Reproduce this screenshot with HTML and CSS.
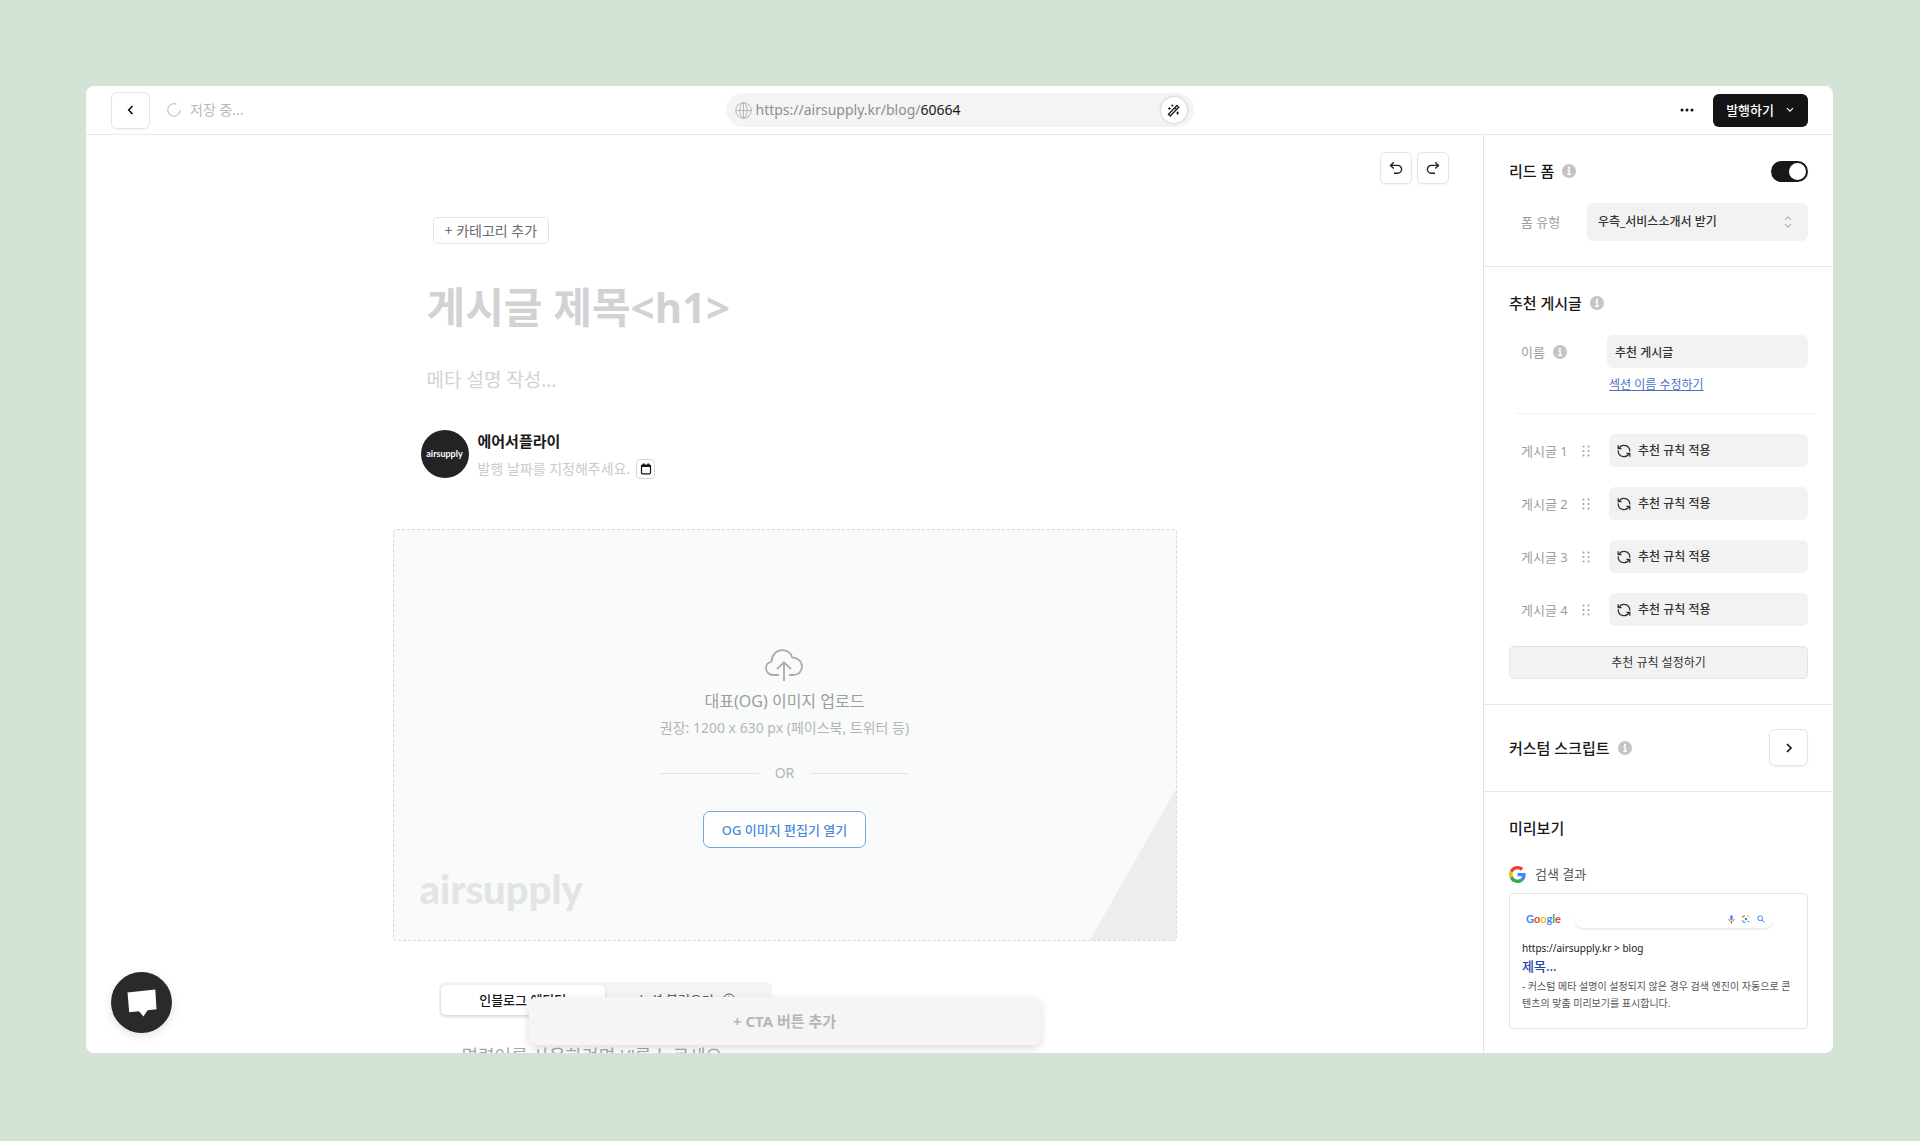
FILE: index.html
```html
<!DOCTYPE html>
<html lang="ko">
<head>
    <meta charset="UTF-8">
    <meta name="viewport" content="width=device-width, initial-scale=1.0">
    <title>airsupply blog editor</title>
    <link rel="stylesheet" href="styles.css">
</head>
<body>
    <!-- 공용 아이콘 -->
    <svg class="sprite" aria-hidden="true">
        <symbol id="i-info" viewBox="0 0 14 14">
            <circle cx="7" cy="7" r="7" fill="#c4c4c6"/>
            <circle cx="7" cy="3.9" r="1.1" fill="#fff"/>
            <path d="M5.5 6.3h1.7v4M5.3 10.3h3.6" fill="none" stroke="#fff" stroke-width="1.4"/>
        </symbol>
        <symbol id="i-drag" viewBox="0 0 8 12">
            <g fill="#9d9da1">
                <circle cx="1.5" cy="1.5" r="1"/><circle cx="6.5" cy="1.5" r="1"/>
                <circle cx="1.5" cy="6" r="1"/><circle cx="6.5" cy="6" r="1"/>
                <circle cx="1.5" cy="10.5" r="1"/><circle cx="6.5" cy="10.5" r="1"/>
            </g>
        </symbol>
        <symbol id="i-sync" viewBox="0 0 14 14">
            <path d="M1.2 1.2v3.4h3.4M2 4.4A5.7 5.7 0 0 1 12.7 7.6M12.8 12.8V9.4H9.4M12 9.600A5.700 5.700 0 0 1 1.300 6.400" fill="none" stroke="#333" stroke-width="1.3"/>
        </symbol>
    </svg>

    <div class="window">
        <header class="topbar">
            <div class="topbar-left">
                <button class="btn-box btn-back" type="button" aria-label="뒤로">
                    <svg width="12" height="12" viewBox="0 0 12 12"><path d="M7.5 2L3.7 6l3.8 4" fill="none" stroke="#111" stroke-width="1.6"/></svg>
                </button>
                <svg class="spinner" width="14" height="14" viewBox="0 0 14 14"><path d="M9.5 1.2A6.200 6.200 0 1 0 13.200 7" fill="none" stroke="#c4c4c6" stroke-width="1.2"/></svg>
                <span class="saving">저장 중...</span>
            </div>
            <div class="url-bar">
                <svg width="17" height="17" viewBox="0 0 17 17" fill="none" stroke="#b5b5b8"><circle cx="8.5" cy="8.5" r="7.8"/><ellipse cx="8.5" cy="8.5" rx="3.6" ry="7.8"/><path d="M.7 8.5h15.600M8.500.7v15.600"/></svg>
                <label class="url-base" for="slug">https://airsupply.kr/blog/</label>
                <input class="url-slug" id="slug" type="text" value="60664">
                <button class="btn-magic" type="button" aria-label="자동 생성">
                    <svg width="13" height="13" viewBox="0 0 13 13" fill="none" stroke="#222"><path d="M1.500 10.200l8.400-8.600 1.800 1.700-8.400 8.600zM7.700 3.800l1.800 1.700" stroke-width="1.4"/><path d="M2.400 3.200v2.600M1.100 4.500h2.600M5.300.6v2M4.300 1.600h2M10.600 7.600v2.800M9.200 9h2.800" stroke-width="1.2"/></svg>
                </button>
            </div>
            <div class="topbar-right">
                <button class="btn-more" type="button" aria-label="더보기">
                    <svg width="14" height="4" viewBox="0 0 14 4" fill="#111"><circle cx="2" cy="2" r="1.5"/><circle cx="7" cy="2" r="1.5"/><circle cx="12" cy="2" r="1.5"/></svg>
                </button>
                <button class="btn-publish" type="button">발행하기
                    <svg width="8" height="6" viewBox="0 0 8 6"><path d="M1 1.200l3 3 3-3" fill="none" stroke="#fff" stroke-width="1.1"/></svg>
                </button>
            </div>
        </header>

        <div class="workspace">
            <main class="editor">
                <div class="history">
                    <button class="btn-box btn-history" type="button" aria-label="실행 취소">
                        <svg width="14" height="14" viewBox="0 0 14 14"><path d="M4.800 1.300L1.500 4.400l3.300 3.100M1.700 4.400h7a3.900 3.900 0 0 1 0 7.800H5" fill="none" stroke="#222" stroke-width="1.4"/></svg>
                    </button>
                    <button class="btn-box btn-history" type="button" aria-label="다시 실행">
                        <svg width="14" height="14" viewBox="0 0 14 14"><path d="M9.200 1.300l3.300 3.100-3.300 3.100M12.300 4.400h-7a3.900 3.900 0 0 0 0 7.800H9" fill="none" stroke="#222" stroke-width="1.4"/></svg>
                    </button>
                </div>

                <div class="post">
                    <button class="btn-category" type="button">+ 카테고리 추가</button>
                    <input class="post-title" type="text" placeholder="게시글 제목&lt;h1&gt;" aria-label="게시글 제목">
                    <input class="post-meta" type="text" placeholder="메타 설명 작성..." aria-label="메타 설명">

                    <div class="author">
                        <div class="avatar">airsupply</div>
                        <div class="author-info">
                            <strong class="author-name">에어서플라이</strong>
                            <div class="publish-date">
                                <span>발행 날짜를 지정해주세요.</span>
                                <button class="btn-date" type="button" aria-label="날짜 선택">
                                    <svg width="12" height="12" viewBox="0 0 12 12"><rect x="1.5" y="2" width="9" height="8.800" rx="1" fill="none" stroke="#111" stroke-width="1.2"/><path d="M1.500 3h9M3.700.6v2M8.300.6v2" stroke="#111" stroke-width="1.8"/></svg>
                                </button>
                            </div>
                        </div>
                    </div>

                    <section class="cover">
                        <svg class="cover-corner" width="86" height="151" viewBox="0 0 86 151"><path d="M86 0v151H0z" fill="#ecedef"/></svg>
                        <span class="cover-logo">airsupply</span>
                        <div class="cover-body">
                            <svg class="cloud" width="38" height="32" viewBox="0 0 38 32" fill="none" stroke="#a9abae" stroke-width="1.8"><path d="M14 26H8.500C4 26 1 23 1 19.200c0-3.400 2.300-6 5.400-6.600C6.700 6 11.500 1.200 17.400 1.200c4.800 0 8.300 2.500 9.800 7.200 5.500.2 9.800 3.900 9.800 8.900 0 5-3.700 8.700-8.800 8.700H24"/><path d="M19 32V13.500M12 20.200l7-7 7 7"/></svg>
                            <p class="cover-title">대표(OG) 이미지 업로드</p>
                            <p class="cover-hint">권장: 1200 x 630 px (페이스북, 트위터 등)</p>
                            <div class="cover-or">OR</div>
                            <button class="btn-og" type="button">OG 이미지 편집기 열기</button>
                        </div>
                    </section>

                    <div class="tabs">
                        <button class="tab tab-active" type="button">인블로그 에디터</button>
                        <button class="tab" type="button">노션 불러오기
                            <svg width="14" height="14" viewBox="0 0 14 14" fill="none" stroke="#555"><circle cx="7" cy="7" r="6"/><path d="M7 6.500v4M7 3.500v1.200"/></svg>
                        </button>
                    </div>
                    <textarea class="post-body" rows="1" placeholder="명령어를 사용하려면 '/'를 누르세요" aria-label="본문"></textarea>
                </div>
            </main>

            <aside class="sidebar">
                <section class="panel">
                    <div class="panel-head">
                        <h2>리드 폼</h2>
                        <svg class="info"><use href="#i-info"/></svg>
                        <input class="toggle" type="checkbox" role="switch" aria-label="리드 폼 사용" checked>
                    </div>
                    <div class="field">
                        <label for="form-type">폼 유형</label>
                        <div class="select">
                            <select id="form-type">
                                <option>우측_서비스소개서 받기</option>
                            </select>
                            <svg width="8" height="12" viewBox="0 0 8 12"><path d="M1 3.800l3-3 3 3M1 8.200l3 3 3-3" fill="none" stroke="#8d8d91"/></svg>
                        </div>
                    </div>
                </section>

                <section class="panel">
                    <div class="panel-head">
                        <h2>추천 게시글</h2>
                        <svg class="info"><use href="#i-info"/></svg>
                    </div>
                    <div class="field">
                        <label for="section-name">이름</label>
                        <svg class="info"><use href="#i-info"/></svg>
                        <input class="name-input" id="section-name" type="text" value="추천 게시글">
                    </div>
                    <a class="edit-link" href="#">섹션 이름 수정하기</a>
                    <hr class="divider">
                    <ul class="posts">
                        <li><span>게시글 1</span><svg class="drag"><use href="#i-drag"/></svg><button class="btn-rule" type="button"><svg><use href="#i-sync"/></svg>추천 규칙 적용</button></li>
                        <li><span>게시글 2</span><svg class="drag"><use href="#i-drag"/></svg><button class="btn-rule" type="button"><svg><use href="#i-sync"/></svg>추천 규칙 적용</button></li>
                        <li><span>게시글 3</span><svg class="drag"><use href="#i-drag"/></svg><button class="btn-rule" type="button"><svg><use href="#i-sync"/></svg>추천 규칙 적용</button></li>
                        <li><span>게시글 4</span><svg class="drag"><use href="#i-drag"/></svg><button class="btn-rule" type="button"><svg><use href="#i-sync"/></svg>추천 규칙 적용</button></li>
                    </ul>
                    <button class="btn-settings" type="button">추천 규칙 설정하기</button>
                </section>

                <section class="panel">
                    <div class="panel-head">
                        <h2>커스텀 스크립트</h2>
                        <svg class="info"><use href="#i-info"/></svg>
                        <button class="btn-box btn-open" type="button" aria-label="열기">
                            <svg width="12" height="12" viewBox="0 0 12 12"><path d="M4 2l4 4-4 4" fill="none" stroke="#111" stroke-width="1.6"/></svg>
                        </button>
                    </div>
                </section>

                <section class="panel">
                    <div class="panel-head">
                        <h2>미리보기</h2>
                    </div>
                    <div class="preview-label">
                        <svg width="17" height="17" viewBox="0 0 48 48">
                            <path fill="#ea4335" d="M24 9.500c3.540 0 6.710 1.220 9.210 3.600l6.850-6.850C35.900 2.380 30.470 0 24 0 14.620 0 6.510 5.380 2.560 13.220l7.980 6.190C12.430 13.720 17.740 9.500 24 9.500z"/>
                            <path fill="#4285f4" d="M46.980 24.550c0-1.570-.15-3.090-.38-4.550H24v9.020h12.940c-.58 2.960-2.260 5.480-4.780 7.180l7.730 6c4.510-4.180 7.090-10.360 7.090-17.650z"/>
                            <path fill="#fbbc05" d="M10.530 28.590c-.48-1.450-.76-2.990-.76-4.590s.27-3.140.76-4.590l-7.980-6.190C.92 16.460 0 20.120 0 24c0 3.880.92 7.540 2.560 10.780l7.970-6.190z"/>
                            <path fill="#34a853" d="M24 48c6.480 0 11.930-2.130 15.890-5.810l-7.730-6c-2.150 1.450-4.920 2.300-8.160 2.300-6.260 0-11.570-4.220-13.470-9.910l-7.980 6.190C6.510 42.620 14.620 48 24 48z"/>
                        </svg>
                        검색 결과
                    </div>
                    <div class="preview-card">
                        <div class="google">
                            <span class="google-logo"><i class="b">G</i><i class="r">o</i><i class="y">o</i><i class="b">g</i><i class="g">l</i><i class="r">e</i></span>
                            <div class="google-search">
                                <svg width="7" height="9" viewBox="0 0 7 9" fill="none"><rect x="2.3" y=".3" width="2.4" height="5" rx="1.2" fill="#4285f4"/><path d="M.8 4c0 3.300 5.400 3.300 5.400 0" stroke="#ea4335" stroke-width=".9"/><path d="M3.500 6.500v2.200" stroke="#34a853"/></svg>
                                <svg width="8" height="8" viewBox="0 0 8 8" fill="none"><path d="M.6 2.800V2C.6 1.200 1.200.9 2 .9h1" stroke="#ea4335"/><path d="M5 .9h1c.9 0 1.400.4 1.400 1.200v.7" stroke="#fbbc05"/><path d="M.6 5v.9c0 .9.500 1.400 1.400 1.400h1.500" stroke="#4285f4"/><circle cx="4" cy="4.100" r="1.300" fill="#4285f4"/><circle cx="6.500" cy="6.600" r=".8" fill="#34a853"/></svg>
                                <svg width="8" height="8" viewBox="0 0 8 8" fill="none" stroke="#4285f4"><circle cx="3.200" cy="3.200" r="2.400"/><path d="M5 5l2.600 2.600"/></svg>
                            </div>
                        </div>
                        <div class="result-url">https://airsupply.kr &gt; blog</div>
                        <div class="result-title">제목...</div>
                        <p class="result-desc">- 커스텀 메타 설명이 설정되지 않은 경우 검색 엔진이 자동으로 콘텐츠의 맞춤 미리보기를 표시합니다.</p>
                    </div>
                </section>
            </aside>
        </div>

        <!-- 에디터 위에 떠 있는 버튼 -->
        <div class="cta-layer">
            <button class="btn-cta" type="button">+ CTA 버튼 추가</button>
        </div>
        <button class="btn-chat" type="button" aria-label="채팅 상담">
            <svg width="30" height="28" viewBox="0 0 30 28"><path d="M.5 3.500L28.300.5l1.200 19.700-8.800 1-4.300 6.300-4.400-5.300-9.800 1.100z" fill="#fff"/></svg>
        </button>
    </div>
</body>
</html>
```
FILE: styles.css
```css
* {
    box-sizing: border-box;
}
body {
    margin: 0;
    height: 100vh;
    padding: 86px 87px 88px 86px;
    background: #d5e3d6;
    color: #18181b;
    font-family: "Noto Sans", "Noto Sans CJK KR", sans-serif;
    font-size: 14px;
    line-height: 20px;
}
button, input, select, textarea {
    margin: 0;
    padding: 0;
    border: 0;
    background: none;
    color: inherit;
    font: inherit;
    outline: none;
}
button {
    cursor: pointer;
}
h2, p, ul {
    margin: 0;
    padding: 0;
}
svg {
    display: block;
    flex: none;
}
.sprite {
    position: absolute;
    width: 0;
    height: 0;
}
.window {
    position: relative;
    display: flex;
    flex-direction: column;
    height: 100%;
    background: #fff;
    border-radius: 8px;
    overflow: hidden;
}
.btn-box {
    display: flex;
    align-items: center;
    justify-content: center;
    background: #fff;
    border: 1px solid #e4e4e7;
    border-radius: 6px;
    box-shadow: 0 1px 2px rgba(0, 0, 0, .05);
}

/* topbar */
.topbar {
    display: grid;
    grid-template-columns: 1fr 468px 1fr;
    align-items: center;
    height: 49px;
    flex: none;
    padding: 0 25px;
    border-bottom: 1px solid #e9e9eb;
}
.topbar-left, .topbar-right {
    display: flex;
    align-items: center;
}
.topbar-right {
    justify-content: flex-end;
    gap: 19px;
}
.btn-back {
    width: 39px;
    height: 37px;
}
.spinner {
    margin: 0 9px 0 17px;
}
.saving {
    color: #b9b9bd;
}
.url-bar {
    display: flex;
    align-items: center;
    height: 34px;
    padding: 0 7px 0 9px;
    background: #f4f4f5;
    border-radius: 17px;
}
.url-base {
    margin-left: 4px;
    color: #8e8e93;
}
.url-slug {
    flex: 1;
    min-width: 0;
}
.btn-magic {
    display: flex;
    align-items: center;
    justify-content: center;
    width: 26px;
    height: 26px;
    background: #fff;
    border-radius: 50%;
    box-shadow: 0 0 3px rgba(0, 0, 0, .25);
}
.btn-publish {
    display: flex;
    align-items: center;
    gap: 12px;
    height: 33px;
    padding: 0 14px 0 13px;
    background: #141416;
    border-radius: 6px;
    color: #fff;
    font-size: 13px;
    font-weight: 500;
}

/* editor */
.workspace {
    display: flex;
    flex: 1;
    min-height: 0;
}
.editor {
    flex: 1;
    min-width: 0;
    overflow: hidden;
}
.history {
    display: flex;
    justify-content: flex-end;
    gap: 5px;
    padding: 17px 34px 0;
}
.btn-history {
    width: 32px;
    height: 32px;
}
.post {
    max-width: 784px;
    margin: 0 auto;
    padding-top: 33px;
}
.btn-category {
    display: block;
    height: 27px;
    margin-left: 40px;
    padding: 0 11px;
    border: 1px solid #e4e4e7;
    border-radius: 5px;
    color: #6b6b70;
    line-height: 24px;
}
.post-title, .post-meta {
    display: block;
    width: calc(100% - 34px);
    margin-left: 34px;
}
.post-title {
    height: 60px;
    margin-top: 32px;
    font-size: 42px;
    font-weight: 700;
}
.post-meta {
    height: 30px;
    margin-top: 29px;
    font-size: 19px;
}
.post-title::placeholder, .post-meta::placeholder {
    color: #d2d2d5;
    opacity: 1;
}
.author {
    display: flex;
    gap: 9px;
    margin: 35px 0 0 28px;
}
.avatar {
    display: flex;
    align-items: center;
    justify-content: center;
    width: 48px;
    height: 48px;
    background: #232325;
    border-radius: 50%;
    color: #fff;
    font-family: Lato, sans-serif;
    font-size: 9px;
    font-weight: 700;
}
.author-name {
    display: block;
    font-size: 15px;
    line-height: 22px;
}
.publish-date {
    display: flex;
    align-items: center;
    gap: 6px;
    height: 34px;
    color: #cacace;
}
.btn-date {
    display: flex;
    align-items: center;
    justify-content: center;
    width: 19px;
    height: 20px;
    border: 1px solid #d8d8db;
    border-radius: 4px;
}
.cover {
    position: relative;
    display: flex;
    justify-content: center;
    height: 412px;
    margin-top: 43px;
    background: #f9fbfa;
    border: 1px dashed #d3dad7;
    border-radius: 4px;
}
.cover-corner {
    position: absolute;
    right: 0;
    bottom: 0;
}
.cover-logo {
    position: absolute;
    left: 26px;
    bottom: 29px;
    color: #e3e4e6;
    font-family: Lato, sans-serif;
    font-size: 40px;
    font-weight: 900;
    line-height: 44px;
}
.cover-body {
    display: flex;
    flex-direction: column;
    align-items: center;
    padding-top: 119px;
}
.cover-title {
    margin-top: 8px;
    color: #9b9da0;
    font-size: 16px;
    line-height: 24px;
}
.cover-hint {
    margin-top: 5px;
    color: #b3b5b8;
}
.cover-or {
    display: flex;
    align-items: center;
    gap: 16px;
    width: 100%;
    margin-top: 25px;
    color: #b3b5b8;
}
.cover-or::before, .cover-or::after {
    content: "";
    flex: 1;
    border-top: 1px solid #e1e3e4;
}
.btn-og {
    height: 37px;
    margin-top: 28px;
    padding: 0 18px;
    background: #fff;
    border: 1px solid #75a7e0;
    border-radius: 7px;
    color: #4a8bd8;
    font-size: 13px;
    font-weight: 500;
}
.tabs {
    display: grid;
    grid-template-columns: 1fr 1fr;
    width: 333px;
    height: 36px;
    margin: 41px 0 0 46px;
    padding: 3px 2px;
    background: #f4f4f5;
    border-radius: 6px;
}
.tab {
    display: flex;
    align-items: center;
    justify-content: center;
    gap: 8px;
    border-radius: 5px;
    color: #66666b;
    font-size: 13px;
    font-weight: 500;
}
.tab-active {
    background: #fff;
    box-shadow: 0 1px 3px rgba(0, 0, 0, .15);
    color: #18181b;
}
.post-body {
    display: block;
    width: calc(100% - 138px);
    height: 28px;
    margin: 24px 69px 0;
    font-size: 18px;
    line-height: 28px;
    resize: none;
    overflow: hidden;
}
.post-body::placeholder {
    color: #aaa6a3;
    opacity: 1;
}

/* sidebar */
.sidebar {
    width: 350px;
    flex: none;
    border-left: 1px solid #e4e4e7;
    overflow: hidden;
}
.panel {
    padding: 24px 25px 25px;
    border-bottom: 1px solid #e9e9eb;
}
.panel:last-child {
    border-bottom: 0;
}
.panel-head {
    display: flex;
    align-items: center;
    gap: 8px;
    min-height: 24px;
}
h2 {
    font-size: 15px;
    font-weight: 500;
    line-height: 24px;
}
.info {
    width: 14px;
    height: 14px;
}
.toggle {
    appearance: none;
    width: 37px;
    height: 21px;
    margin-left: auto;
    background: #18181b;
    border-radius: 11px;
    cursor: pointer;
}
.toggle::before {
    content: "";
    display: block;
    width: 17px;
    height: 17px;
    margin: 2px;
    background: #fff;
    border-radius: 50%;
}
.toggle:checked::before {
    margin-left: 18px;
}
.field {
    display: flex;
    align-items: center;
    gap: 8px;
    margin-top: 20px;
    padding-left: 12px;
}
.field label, .posts span {
    color: #9d9da1;
    font-size: 13px;
}
.select {
    display: flex;
    align-items: center;
    width: 221px;
    height: 38px;
    margin-left: auto;
    padding: 0 16px 0 11px;
    background: #f2f2f3;
    border-radius: 6px;
}
.select select {
    appearance: none;
    flex: 1;
    min-width: 0;
    color: #333;
    font-size: 12px;
    font-weight: 500;
}
.name-input {
    width: 201px;
    height: 33px;
    margin-left: auto;
    padding: 0 8px;
    background: #f2f2f3;
    border-radius: 6px;
    color: #333;
    font-size: 12px;
    font-weight: 500;
}
.edit-link {
    display: table;
    margin: 7px 0 0 100px;
    color: #4a72c4;
    font-size: 12px;
}
.divider {
    margin: 18px -8px 20px 7px;
    border: 0;
    border-top: 1px solid #f1f1f2;
}
.posts {
    display: grid;
    gap: 20px;
    list-style: none;
}
.posts li {
    display: flex;
    align-items: center;
    padding-left: 12px;
}
.drag {
    width: 8px;
    height: 12px;
    margin-left: 14px;
}
.btn-rule {
    display: flex;
    align-items: center;
    gap: 7px;
    width: 199px;
    height: 33px;
    margin-left: auto;
    padding: 0 8px;
    background: #f2f2f3;
    border-radius: 6px;
    color: #333;
    font-size: 12px;
    font-weight: 500;
}
.btn-rule svg {
    width: 14px;
    height: 14px;
}
.btn-settings {
    display: block;
    width: 100%;
    height: 33px;
    margin-top: 20px;
    background: #f2f2f3;
    border: 1px solid #e4e4e7;
    border-radius: 5px;
    color: #333;
    font-size: 12px;
}
.btn-open {
    width: 39px;
    height: 37px;
    margin-left: auto;
}
.preview-label {
    display: flex;
    align-items: center;
    gap: 9px;
    margin-top: 24px;
    color: #55555a;
    font-size: 13px;
}
.preview-card {
    margin-top: 9px;
    padding: 16px 12px;
    border: 1px solid #e4e4e7;
    border-radius: 4px;
}
.google {
    display: flex;
    align-items: center;
    gap: 14px;
    margin-bottom: 10px;
    padding-left: 4px;
}
.google-logo {
    font-family: Lato, sans-serif;
    font-size: 11px;
    font-weight: 700;
    line-height: 18px;
}
.google-logo i {
    font-style: normal;
}
.google-logo .b { color: #4285f4; }
.google-logo .r { color: #ea4335; }
.google-logo .y { color: #fbbc05; }
.google-logo .g { color: #34a853; }
.google-search {
    display: flex;
    align-items: center;
    justify-content: flex-end;
    gap: 7px;
    width: 198px;
    height: 18px;
    padding-right: 8px;
    border-radius: 9px;
    box-shadow: 0 2px 2px rgba(0, 0, 0, .08);
}
.result-url {
    font-size: 10px;
    line-height: 20px;
}
.result-title {
    color: #2a43a5;
    font-size: 13px;
    font-weight: 500;
    line-height: 17px;
}
.result-desc {
    margin-top: 3px;
    color: #55555a;
    font-size: 10px;
    line-height: 17px;
    word-break: break-all;
}

/* floating */
.cta-layer {
    position: absolute;
    left: 0;
    right: 350px;
    bottom: 8px;
    display: flex;
    justify-content: center;
    pointer-events: none;
}
.btn-cta {
    width: 512px;
    height: 48px;
    background: #f5f5f5;
    border-radius: 8px;
    box-shadow: 0 3px 8px rgba(0, 0, 0, .14);
    color: #b5b5b8;
    font-size: 15px;
    font-weight: 700;
    pointer-events: auto;
}
.btn-chat {
    position: absolute;
    left: 25px;
    bottom: 20px;
    display: flex;
    align-items: center;
    justify-content: center;
    width: 61px;
    height: 61px;
    background: #2a2a2c;
    border-radius: 50%;
    box-shadow: 0 3px 10px rgba(0, 0, 0, .12);
}
```
